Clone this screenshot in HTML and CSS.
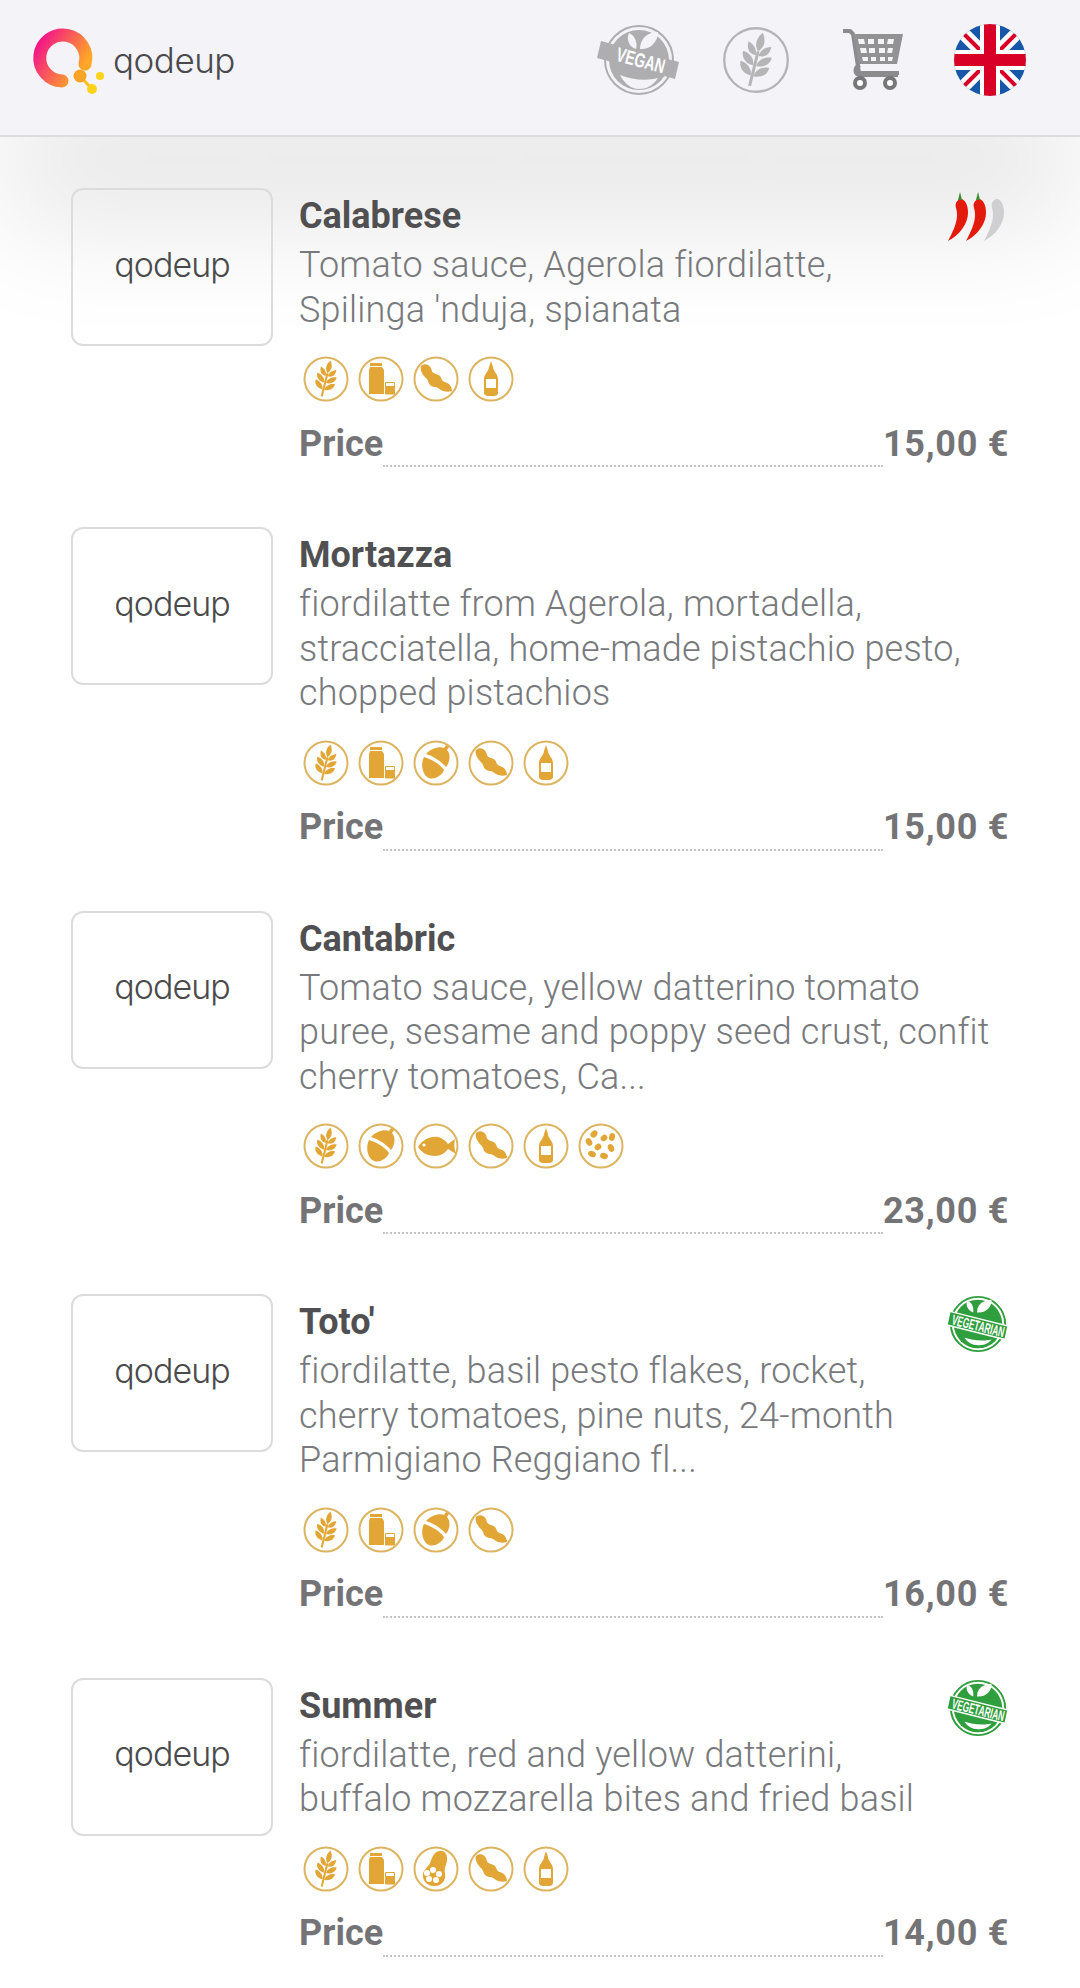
FILE: index.html
```html
<!DOCTYPE html>
<html lang="en">
<head>
  <meta charset="UTF-8">
  <meta name="viewport" content="width=device-width, initial-scale=1.0">
  <title>qodeup menu</title>
  <link rel="stylesheet" href="styles.css">
</head>
<body>
  <!-- Allergen icons, reused in every row -->
  <svg class="defs" width="0" height="0">
    <defs>
      <linearGradient id="q-grad" x1="0" y1="0" x2="1" y2="0.6">
        <stop offset="0" stop-color="#f20d8e"/>
        <stop offset="1" stop-color="#ffa726"/>
      </linearGradient>
      <g id="ear">
        <path d="M23 4c3 4 4 9 0 13c-4-4-3-9 0-13z"/>
        <path d="M22 20c-5 0-7-3-7-8c4 1 7 4 7 8z"/>
        <path d="M24 20c5 0 7-3 7-8c-4 1-7 4-7 8z"/>
        <path d="M22 27c-5 0-9-3-9-8c5 0 9 4 9 8z"/>
        <path d="M24 27c5 0 9-3 9-8c-5 0-9 4-9 8z"/>
        <path d="M22 34c-5 0-9-3-9-8c5 0 9 4 9 8z"/>
        <path d="M24 34c5 0 9-3 9-8c-5 0-9 4-9 8z"/>
        <path d="M22 17h2v24h-2z"/>
      </g>
      <path id="pepper" d="M12 8C8 10 7 13 8 17C10 24 10 32 0 50C12 44 20 32 20 22C20 15 18 10 14 8Z"/>
      <symbol id="i-wheat" viewBox="0 0 46 46">
        <circle class="ring" cx="23" cy="23" r="21.5"/>
        <use href="#ear" transform="rotate(14 23 23)"/>
      </symbol>
      <symbol id="i-milk" viewBox="0 0 46 46">
        <circle class="ring" cx="23" cy="23" r="21.5"/>
        <path d="M12 7h12v3h-12z"/>
        <path d="M12 11h12l2 3v24h-15v-24z"/>
        <path d="M27.500 26.500h9v11.500h-9z" class="glass"/>
        <path d="M28 30h8v8h-8z"/>
      </symbol>
      <symbol id="i-acorn" viewBox="0 0 46 46">
        <circle class="ring" cx="23" cy="23" r="21.5"/>
        <path d="M13 14c5-6 14-8 18-6l2-3l3 2l-2 3c4 4 3 12-1 17c-5-6-13-11-20-13z"/>
        <path d="M11 17c7 2 16 7 20 13c-2 6-10 10-15 8c-6-2-9-13-5-21z"/>
      </symbol>
      <symbol id="i-bean" viewBox="0 0 46 46">
        <circle class="ring" cx="23" cy="23" r="21.5"/>
        <path d="M8 10c3-3 8-2 10 2c1 3 1 5 5 6c4 1 5 3 6 6c1 2 4 2 7 4c2 2 3 5 3 7c-3 1-8 1-11-1c-2-1-3-3-7-3c-4-1-5-3-6-6c-1-3-4-4-6-8c-1-2-2-5-1-7z"/>
      </symbol>
      <symbol id="i-sauce" viewBox="0 0 46 46">
        <circle class="ring" cx="23" cy="23" r="21.5"/>
        <path d="M23 5l2 6c0 4 5 7 5 12v14c0 2-2 3-4 3h-6c-2 0-4-1-4-3v-14c0-5 5-8 5-12z"/>
        <path class="hole" d="M18 23h10v9h-10z"/>
      </symbol>
      <symbol id="i-fish" viewBox="0 0 46 46">
        <circle class="ring" cx="23" cy="23" r="21.5"/>
        <path d="M5 24c4-7 12-11 20-10c4 1 8 4 10 7l7-5c-1 5-1 9 1 15l-8-5c-3 4-7 7-13 7c-8 0-14-4-17-9z"/>
        <circle class="hole" cx="11" cy="22" r="1.600"/>
      </symbol>
      <symbol id="i-sesame" viewBox="0 0 46 46">
        <circle class="ring" cx="23" cy="23" r="21.5"/>
        <ellipse cx="16" cy="11" rx="3" ry="4" transform="rotate(40 16 11)"/>
        <ellipse cx="11" cy="19" rx="3" ry="4" transform="rotate(-30 11 19)"/>
        <ellipse cx="26" cy="15" rx="3" ry="3.600" transform="rotate(50 26 15)"/>
        <ellipse cx="34" cy="14" rx="3" ry="4" transform="rotate(15 34 14)"/>
        <ellipse cx="20" cy="24" rx="3" ry="3.600" transform="rotate(50 20 24)"/>
        <ellipse cx="33" cy="25" rx="3" ry="4" transform="rotate(-25 33 25)"/>
        <ellipse cx="14" cy="31" rx="4" ry="3" transform="rotate(25 14 31)"/>
        <ellipse cx="26" cy="33" rx="4" ry="3" transform="rotate(15 26 33)"/>
      </symbol>
      <symbol id="i-peanut" viewBox="0 0 46 46">
        <circle class="ring" cx="23" cy="23" r="21.5"/>
        <path d="M26 5c6-1 9 4 8 10c-1 5-3 7-2 12c1 6-2 12-9 13c-8 1-14-5-13-12c1-5 5-7 7-11c2-4 3-11 9-12z"/>
        <circle class="hole" cx="14" cy="27" r="3"/>
        <circle class="hole" cx="20" cy="24" r="3"/>
        <circle class="hole" cx="26" cy="28" r="3"/>
        <circle class="hole" cx="16" cy="33" r="3"/>
        <circle class="hole" cx="23" cy="34" r="3"/>
      </symbol>
      <symbol id="i-veg" viewBox="0 0 64 64">
        <circle cx="32" cy="32" r="28" fill="#fff" stroke="#2f9e3c" stroke-width="2"/>
        <circle cx="32" cy="32" r="25" fill="#2f9e3c"/>
        <path d="M27 20C21 18 19 12 21 8C25 9 28 14 27 20z" fill="#fff"/>
        <path d="M31 20C31 12 37 7 46 7C46 15 40 21 31 20z" fill="#fff"/>
        <path d="M18 46c8 3 20 4 28 2c-4 5-9 6-14 6c-6 0-11-3-14-8z" fill="#fff"/>
        <path d="M3 19l60 15l-3 14l-60-15z" fill="#2f9e3c" stroke="#fff" stroke-width="1.500"/>
        <text class="veg-text" transform="translate(31 39) rotate(14) scale(.57 1)" text-anchor="middle">VEGETARIAN</text>
      </symbol>
    </defs>
  </svg>

  <header class="topbar">
    <a class="brand">
      <svg class="brand-mark" width="76" height="72" viewBox="0 0 76 72">
        <path d="M57 40A23 23 0 1 0 34 57" fill="none" stroke="url(#q-grad)" stroke-width="13" stroke-linecap="round"/>
        <path d="M52 52L64 65" stroke="#ffc21a" stroke-width="3"/>
        <circle cx="52" cy="52" r="6.500" fill="#f9a327"/>
        <circle cx="72" cy="52" r="4" fill="#ffd21c"/>
        <circle cx="64" cy="65" r="5" fill="#ffd21c"/>
      </svg>
      <span class="wordmark">qodeup</span>
    </a>
    <nav class="top-icons">
      <svg width="84" height="76" viewBox="0 0 84 76">
        <circle cx="42" cy="38" r="34" fill="none" stroke="#aeaeb0" stroke-width="2"/>
        <circle cx="42" cy="38" r="30" fill="#aeaeb0"/>
        <path d="M39 27C32 25 29 17 32 11C37 13 41 20 39 27z" fill="#f3f3f8"/>
        <path d="M43 27C43 17 50 10 61 10C61 20 53 28 43 27z" fill="#f3f3f8"/>
        <path d="M23 53c12 5 27 6 38 3c-5 8-12 11-19 11c-8 0-15-6-19-14z" fill="#f3f3f8"/>
        <path d="M4 19l78 21l-4 17l-78-21z" fill="#aeaeb0"/>
        <text class="badge-text" transform="translate(42 45) rotate(15) scale(.7 1)" text-anchor="middle">VEGAN</text>
      </svg>
      <svg width="68" height="68" viewBox="0 0 46 46">
        <circle cx="23" cy="23" r="21.5" fill="none" stroke="#b5b5b8" stroke-width="1.600"/>
        <use href="#ear" fill="#b5b5b8" transform="rotate(14 23 23)"/>
      </svg>
      <svg width="64" height="64" viewBox="0 0 64 64">
        <path d="M2 3h7l3 3l6 39h40" fill="none" stroke="#8b8b8e" stroke-width="4" stroke-linejoin="round"/>
        <path fill-rule="evenodd" fill="#929295" d="M12 6h50l-6 30h-38zM17 11l1 5h6l-1-5zM27 11v5h6v-5zM37 11v5h6v-5zM47 11l-1 5h6l1-5zM19 20l1 5h6l-1-5zM28 20v5h6v-5zM38 20v5h6v-5zM47 20l-1 5h5l1-5zM21 29l1 4h5v-4zM30 29v4h5v-4zM39 29v4h5v-4zM47 29v4h4l1-4z"/>
        <path d="M19 37c-6 2-6 10 0 10h38" fill="none" stroke="#8b8b8e" stroke-width="4"/>
        <circle cx="19" cy="55" r="5" fill="#fff" stroke="#77777a" stroke-width="4"/>
        <circle cx="49" cy="55" r="5" fill="#fff" stroke="#77777a" stroke-width="4"/>
      </svg>
      <svg width="72" height="72" viewBox="0 0 72 72">
        <clipPath id="flag-clip"><circle cx="36" cy="36" r="36"/></clipPath>
        <g clip-path="url(#flag-clip)">
          <rect width="72" height="72" fill="#1757a8"/>
          <path d="M0 0L72 72M72 0L0 72" stroke="#fff" stroke-width="13"/>
          <path d="M8 8L30 30M42 42L64 64M64 8L42 30M30 42L8 64" stroke="#d80027" stroke-width="4"/>
          <path d="M36 0V72M0 36H72" stroke="#fff" stroke-width="20"/>
          <path d="M36 0V72M0 36H72" stroke="#d80027" stroke-width="12"/>
        </g>
      </svg>
    </nav>
  </header>

  <main class="menu">
    <article class="item">
      <div class="thumb"><span class="thumb-logo">qodeup</span></div>
      <div class="info">
        <h2 class="name">Calabrese</h2>
        <p class="desc">Tomato sauce, Agerola fiordilatte,<br>Spilinga 'nduja, spianata</p>
        <div class="allergens">
          <svg class="allergen"><use href="#i-wheat"/></svg>
          <svg class="allergen"><use href="#i-milk"/></svg>
          <svg class="allergen"><use href="#i-bean"/></svg>
          <svg class="allergen"><use href="#i-sauce"/></svg>
        </div>
        <div class="price-row"><span class="price-label">Price</span><span class="dots"></span><span class="price">15,00 €</span></div>
      </div>
      <svg class="chili" width="56" height="54" viewBox="0 0 56 54">
        <use href="#pepper" fill="#e31b0c"/>
        <use href="#pepper" fill="#e31b0c" x="18"/>
        <use href="#pepper" fill="#cfcfd1" x="36"/>
        <path d="M12 1L14 9L10 9ZM30 1L32 9L28 9Z" fill="#3f8a2e"/>
      </svg>
    </article>

    <article class="item">
      <div class="thumb"><span class="thumb-logo">qodeup</span></div>
      <div class="info">
        <h2 class="name">Mortazza</h2>
        <p class="desc">fiordilatte from Agerola, mortadella,<br>stracciatella, home-made pistachio pesto,<br>chopped pistachios</p>
        <div class="allergens">
          <svg class="allergen"><use href="#i-wheat"/></svg>
          <svg class="allergen"><use href="#i-milk"/></svg>
          <svg class="allergen"><use href="#i-acorn"/></svg>
          <svg class="allergen"><use href="#i-bean"/></svg>
          <svg class="allergen"><use href="#i-sauce"/></svg>
        </div>
        <div class="price-row"><span class="price-label">Price</span><span class="dots"></span><span class="price">15,00 €</span></div>
      </div>
    </article>

    <article class="item">
      <div class="thumb"><span class="thumb-logo">qodeup</span></div>
      <div class="info">
        <h2 class="name">Cantabric</h2>
        <p class="desc">Tomato sauce, yellow datterino tomato<br>puree, sesame and poppy seed crust, confit<br>cherry tomatoes, Ca...</p>
        <div class="allergens">
          <svg class="allergen"><use href="#i-wheat"/></svg>
          <svg class="allergen"><use href="#i-acorn"/></svg>
          <svg class="allergen"><use href="#i-fish"/></svg>
          <svg class="allergen"><use href="#i-bean"/></svg>
          <svg class="allergen"><use href="#i-sauce"/></svg>
          <svg class="allergen"><use href="#i-sesame"/></svg>
        </div>
        <div class="price-row"><span class="price-label">Price</span><span class="dots"></span><span class="price">23,00 €</span></div>
      </div>
    </article>

    <article class="item">
      <div class="thumb"><span class="thumb-logo">qodeup</span></div>
      <div class="info">
        <h2 class="name">Toto'</h2>
        <p class="desc">fiordilatte, basil pesto flakes, rocket,<br>cherry tomatoes, pine nuts, 24-month<br>Parmigiano Reggiano fl...</p>
        <div class="allergens">
          <svg class="allergen"><use href="#i-wheat"/></svg>
          <svg class="allergen"><use href="#i-milk"/></svg>
          <svg class="allergen"><use href="#i-acorn"/></svg>
          <svg class="allergen"><use href="#i-bean"/></svg>
        </div>
        <div class="price-row"><span class="price-label">Price</span><span class="dots"></span><span class="price">16,00 €</span></div>
      </div>
      <svg class="veg-badge"><use href="#i-veg"/></svg>
    </article>

    <article class="item">
      <div class="thumb"><span class="thumb-logo">qodeup</span></div>
      <div class="info">
        <h2 class="name">Summer</h2>
        <p class="desc">fiordilatte, red and yellow datterini,<br>buffalo mozzarella bites and fried basil</p>
        <div class="allergens">
          <svg class="allergen"><use href="#i-wheat"/></svg>
          <svg class="allergen"><use href="#i-milk"/></svg>
          <svg class="allergen"><use href="#i-peanut"/></svg>
          <svg class="allergen"><use href="#i-bean"/></svg>
          <svg class="allergen"><use href="#i-sauce"/></svg>
        </div>
        <div class="price-row"><span class="price-label">Price</span><span class="dots"></span><span class="price">14,00 €</span></div>
      </div>
      <svg class="veg-badge"><use href="#i-veg"/></svg>
    </article>
  </main>
</body>
</html>
```
FILE: styles.css
```css
body {
  margin: 0;
  height: 1988px;
  overflow: hidden;
  background-color: #fff;
  font-family: "Roboto", "Liberation Sans", sans-serif;
  font-variant-ligatures: none;
  color: #77797c;
}

.defs {
  position: absolute;
}

/* Header */
.topbar {
  position: relative;
  display: flex;
  justify-content: space-between;
  align-items: center;
  height: 119px;
  padding: 0 32px 16px 28px;
  background-color: #f3f3f8;
  border-bottom: 2px solid #dcdcdf;
  box-shadow: 0 90px 120px -4px rgba(0,0,0,.1);
}

.brand {
  display: flex;
  align-items: center;
  gap: 9px;
}

.wordmark {
  font-family: "Inter", sans-serif;
  font-size: 35px;
  font-weight: 300;
  color: #4a4a4c;
  letter-spacing: -.5px;
}

.top-icons {
  display: grid;
  grid-template-columns: repeat(4, 117px);
  justify-items: center;
  align-items: center;
}

/* Menu rows */
.menu {
  position: relative;
  padding: 51px 71px 0;
}

.item {
  position: relative;
  display: flex;
  gap: 26px;
  margin-bottom: 60px;
}

.thumb {
  flex: none;
  display: flex;
  align-items: center;
  justify-content: center;
  box-sizing: border-box;
  width: 202px;
  height: 158px;
  border: 2px solid #dcdcdc;
  border-radius: 12px;
}

.thumb-logo {
  font-family: "Inter", sans-serif;
  font-size: 34px;
  font-weight: 300;
  color: #4a4a4c;
  letter-spacing: -1px;
  margin-bottom: 6px;
}

.info {
  flex: 1;
  min-width: 0;
}

.name {
  margin: 2px 0 0;
  font-size: 36px;
  line-height: 53px;
  font-weight: 700;
  color: #505052;
}

.desc {
  margin: 0;
  font-size: 36px;
  line-height: 44.5px;
  font-weight: 300;
  letter-spacing: .2px;
  white-space: nowrap;
}

.allergens {
  display: flex;
  gap: 9px;
  margin-top: 24px;
  padding-left: 4px;
}

.allergen {
  width: 46px;
  height: 46px;
  fill: #e2a637;
}

.ring {
  fill: none;
  stroke: #dcb45f;
  stroke-width: 2;
}

.hole {
  fill: #fff;
}

.glass {
  fill: #fff;
  stroke: #e2a637;
  stroke-width: 1;
}

.price-row {
  display: flex;
  margin-top: 19.5px;
  font-size: 36px;
  line-height: 44px;
  font-weight: 700;
  color: #747477;
}

.price-label,
.price {
  padding-bottom: 1.5px;
}

.price {
  letter-spacing: .7px;
}

.dots {
  flex: 1;
  border-bottom: 2px dotted #c4c4c6;
}

.chili {
  position: absolute;
  top: 3px;
  right: 5px;
}

.veg-badge {
  position: absolute;
  top: -1px;
  right: 0;
  width: 62px;
  height: 62px;
}

.badge-text {
  font-family: "Liberation Sans", sans-serif;
  font-size: 20px;
  font-weight: 700;
  fill: #fff;
}

.veg-text {
  font-family: "Liberation Sans", sans-serif;
  font-size: 15px;
  font-weight: 700;
  fill: #fff;
}
```
